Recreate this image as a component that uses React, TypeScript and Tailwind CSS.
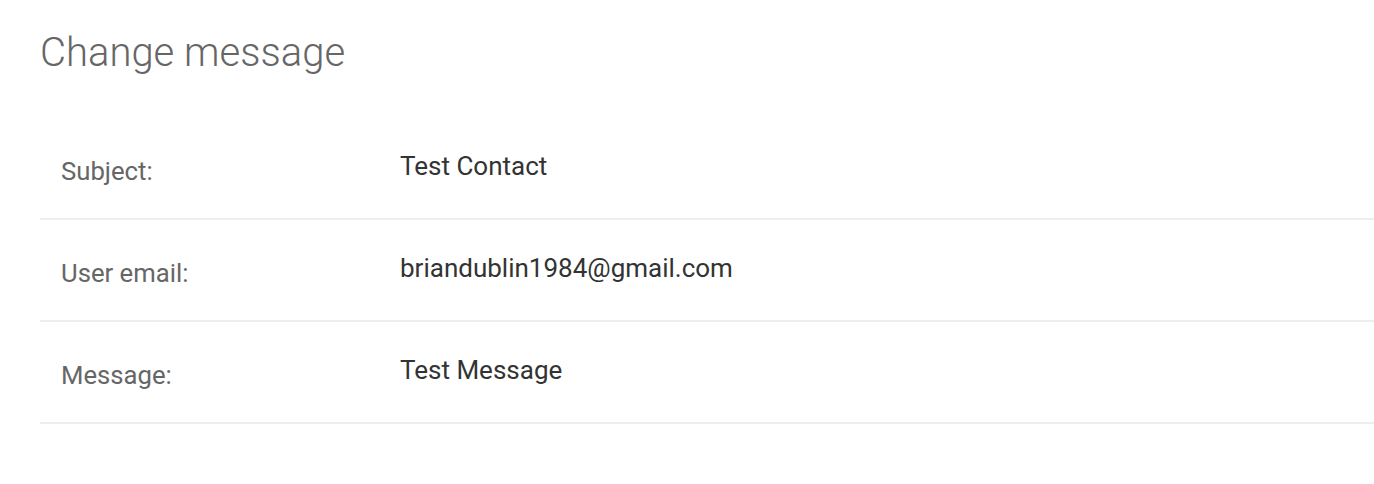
import React from 'react';

const rows = [
    { label: 'Subject:', value: 'Test Contact' },
    { label: 'User email:', value: 'briandublin1984@gmail.com' },
    { label: 'Message:', value: 'Test Message' },
];

export default function App() {
    return (
        <div className="min-h-[484px] bg-white pl-10 pt-[29px]" style={{ fontFamily: 'Roboto, "Liberation Sans", sans-serif' }}>
            <h1 className="text-[40px] font-light leading-[48px] text-[#666666]">Change message</h1>
            <div className="mt-[41px]">
                {rows.map((r) => (
                    <div key={r.label} className="flex h-[102px] border-b-2 border-[#eeeeee]">
                        <div className="w-[360px] pl-[21px] pt-[39px] text-[25.7px] leading-[28px] text-[#666666]">{r.label}</div>
                        <div className="pt-[33px] text-[26px] leading-[30px] text-[#333333]">{r.value}</div>
                    </div>
                ))}
            </div>
        </div>
    );
}
